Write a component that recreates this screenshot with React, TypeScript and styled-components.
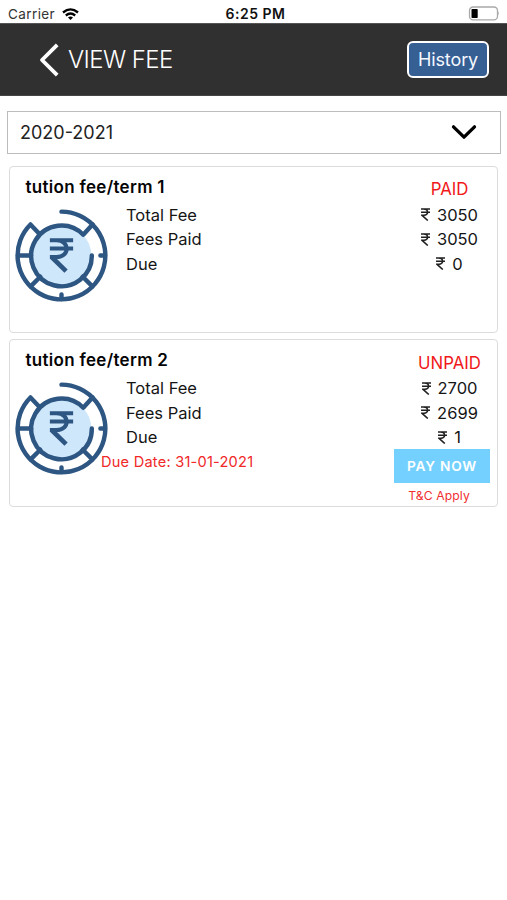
import React from 'react';
import styled, { createGlobalStyle } from 'styled-components';

const GlobalStyle = createGlobalStyle`
  * { box-sizing: border-box; }
  body {
    margin: 0;
    background: #fff;
    color: #151515;
    font-family: Inter, 'Liberation Sans', sans-serif;
  }
  button { font-family: inherit; padding: 0; }
  svg { display: block; flex: none; }
`;

const Screen = styled.div`
  width: 507px;
  min-height: 900px;
  background: #fff;
`;

const StatusBar = styled.div`
  display: grid;
  grid-template-columns: 1fr auto 1fr;
  align-items: center;
  height: 23px;
  padding: 5px 7px 0 8px;
  font-size: 13.5px;
  line-height: 18px;
`;

const Carrier = styled.div`
  display: flex;
  align-items: center;
  gap: 7px;
  color: #333;
  letter-spacing: 0.4px;
`;

const Clock = styled.div`
  font-weight: 600;
  font-size: 14px;
  letter-spacing: 0.5px;
  color: #111;
  padding-left: 3px;
`;

const BatterySlot = styled.div`
  display: flex;
  justify-content: flex-end;
  margin-top: -1px;
`;

const Header = styled.header`
  display: flex;
  align-items: center;
  height: 73px;
  padding: 0 18px 0 39px;
  background: #303030;
  border-top: 1px solid #555;
  border-bottom: 1px solid #444;
`;

const Title = styled.h1`
  flex: 1;
  margin: 0 0 0 8px;
  color: #fff;
  font-size: 24px;
  font-weight: 300;
  line-height: 30px;
  letter-spacing: -0.6px;
`;

const HistoryButton = styled.button`
  width: 82px;
  height: 37px;
  border: 2px solid #fff;
  border-radius: 6px;
  background: #365f94;
  color: #f4f8ff;
  font-size: 18px;
  letter-spacing: -0.1px;
  line-height: 30px;
`;

const YearSelect = styled.button`
  display: flex;
  align-items: center;
  justify-content: space-between;
  width: 494px;
  height: 43px;
  margin: 14.5px 0 0 7px;
  padding: 0 23px 0 12px;
  border: 1.5px solid #bcbcbc;
  background: #fff;
  color: #222;
  font-size: 18px;
`;

const CardList = styled.main`
  display: flex;
  flex-direction: column;
  gap: 6px;
  padding: 12px 9px 0;
`;

const Card = styled.section`
  display: grid;
  grid-template-columns: 91px 288px 96px;
  grid-template-rows: 36px 1fr;
  height: 167.5px;
  padding-left: 5px;
  border: 1.5px solid #dcdcdc;
  border-radius: 4px;
`;

const CardTitle = styled.h2`
  grid-column: 1 / 3;
  margin: 8px 0 0 10.5px;
  color: #050505;
  font-size: 17px;
  font-weight: 600;
  line-height: 25px;
  letter-spacing: 0.3px;
`;

const Status = styled.div`
  padding: 10.5px 0 0 15px;
  color: #f01818;
  font-size: 16.8px;
  line-height: 25px;
  text-align: center;
`;

const IconCell = styled.div`
  padding-top: 6px;
`;

const Labels = styled.div`
  padding-left: 20px;
  font-size: 16.5px;
  line-height: 24.5px;
`;

const DueDate = styled.div`
  margin-left: -25px;
  color: #f02828;
  font-size: 14.6px;
  line-height: 25px;
  letter-spacing: 0.22px;
`;

const Amounts = styled.div`
  font-size: 16.5px;
  line-height: 24.5px;
  text-align: center;
`;

const Amount = styled.div`
  display: flex;
  align-items: center;
  justify-content: center;
  gap: 7px;
  padding-left: 15px;
`;

const PayButton = styled.button`
  display: block;
  width: 96px;
  height: 34px;
  margin: -1px 0 0 0;
  border: 0;
  background: #74d1ff;
  color: #fff;
  font-size: 13.7px;
  font-weight: 600;
  letter-spacing: 0.8px;
`;

const Terms = styled.div`
  margin-top: 4px;
  padding-right: 6px;
  color: #f03030;
  font-size: 12.2px;
  letter-spacing: 0.1px;
  line-height: 17px;
`;

const WifiIcon = () => (
  <svg width="17" height="13" viewBox="0 0 17 13" fill="none" stroke="#000" strokeWidth="2.3">
    <path d="M1 4.5Q8.5-1.8 16 4.5" />
    <path d="M3.8 7.5Q8.5 3.6 13.2 7.5" />
    <path d="M6 9.4Q8.5 7.6 11 9.4L8.5 12Z" fill="#000" stroke="none" />
  </svg>
);

const BatteryIcon = () => (
  <svg width="32" height="15" viewBox="0 0 32 15">
    <rect x="1.5" y="1" width="28" height="12.8" rx="3.6" fill="#fff" stroke="#a9a9a9" strokeWidth="1.3" />
    <rect x="3.5" y="3" width="6.2" height="9" rx="0.8" fill="#000" />
    <path d="M30.4 5.3Q32 7.4 30.4 9.5Z" fill="#999" />
  </svg>
);

const BackIcon = () => (
  <svg width="21" height="34" viewBox="0 0 21 34" fill="none" stroke="#fff" strokeWidth="3.8">
    <path d="M18.2 1.8L3 17L18.2 32.2" strokeLinejoin="round" />
  </svg>
);

const ChevronIcon = () => (
  <svg width="26" height="16" viewBox="0 0 26 16" fill="none" stroke="#000" strokeWidth="3.3">
    <path d="M2.5 2.8L13 13.2L23.5 2.8" strokeLinecap="round" strokeLinejoin="round" />
  </svg>
);

const RupeeCoinIcon = () => (
  <svg width="93" height="93" viewBox="0 0 92 92" fill="none" stroke="#2e5682" strokeWidth="4.4" strokeLinecap="round">
    <circle cx="46" cy="46" r="29.5" fill="#cfe7fb" stroke="none" />
    <path d="M46 2.6A43.4 43.4 0 1 1 15.3 15.3L24 24.5" strokeLinejoin="round" />
    <path d="M76 46A30 30 0 1 1 67.5 25.5L76.7 15.3" strokeLinejoin="round" />
    <path d="M3 46H16M89 46H84.5M46 89V84.5M25 67L15.5 76.5M67 67L76.5 76.5" />
    <g strokeLinecap="butt" strokeWidth="4">
      <path d="M34.5 31H57.5M34.5 39H57.5M41 31C54.5 31 54.5 47.5 41 47.5H34.5" />
      <path d="M36.2 47.5L50.5 61.5" strokeWidth="4.6" />
    </g>
  </svg>
);

const RupeeIcon = () => (
  <svg width="9" height="13" viewBox="0 0 9 13" fill="none" stroke="#202020" strokeWidth="1.6">
    <path d="M0 1H9M0 4.2H9M2.6 1C7.8 1 7.8 7.2 3 7.2H.8L6.8 12.5" />
  </svg>
);

interface Fee {
  title: string;
  status: string;
  total: string;
  paid: string;
  due: string;
  dueDate?: string;
}

const fees: Fee[] = [
  { title: 'tution fee/term 1', status: 'PAID', total: '3050', paid: '3050', due: '0' },
  { title: 'tution fee/term 2', status: 'UNPAID', total: '2700', paid: '2699', due: '1', dueDate: '31-01-2021' },
];

const FeeCard = ({ fee }: { fee: Fee }) => (
  <Card>
    <CardTitle>{fee.title}</CardTitle>
    <Status>{fee.status}</Status>
    <IconCell><RupeeCoinIcon /></IconCell>
    <Labels>
      <div>Total Fee</div>
      <div>Fees Paid</div>
      <div>Due</div>
      {fee.dueDate && <DueDate>Due Date: {fee.dueDate}</DueDate>}
    </Labels>
    <Amounts>
      {[fee.total, fee.paid, fee.due].map((value, i) => (
        <Amount key={i}><RupeeIcon />{value}</Amount>
      ))}
      {fee.dueDate && (
        <>
          <PayButton>PAY NOW</PayButton>
          <Terms>T&amp;C Apply</Terms>
        </>
      )}
    </Amounts>
  </Card>
);

export default function App() {
  return (
    <Screen>
      <GlobalStyle />
      <StatusBar>
        <Carrier>Carrier <WifiIcon /></Carrier>
        <Clock>6:25 PM</Clock>
        <BatterySlot><BatteryIcon /></BatterySlot>
      </StatusBar>
      <Header>
        <BackIcon />
        <Title>VIEW FEE</Title>
        <HistoryButton>History</HistoryButton>
      </Header>
      <YearSelect>2020-2021<ChevronIcon /></YearSelect>
      <CardList>
        {fees.map((fee) => <FeeCard key={fee.title} fee={fee} />)}
      </CardList>
    </Screen>
  );
}
